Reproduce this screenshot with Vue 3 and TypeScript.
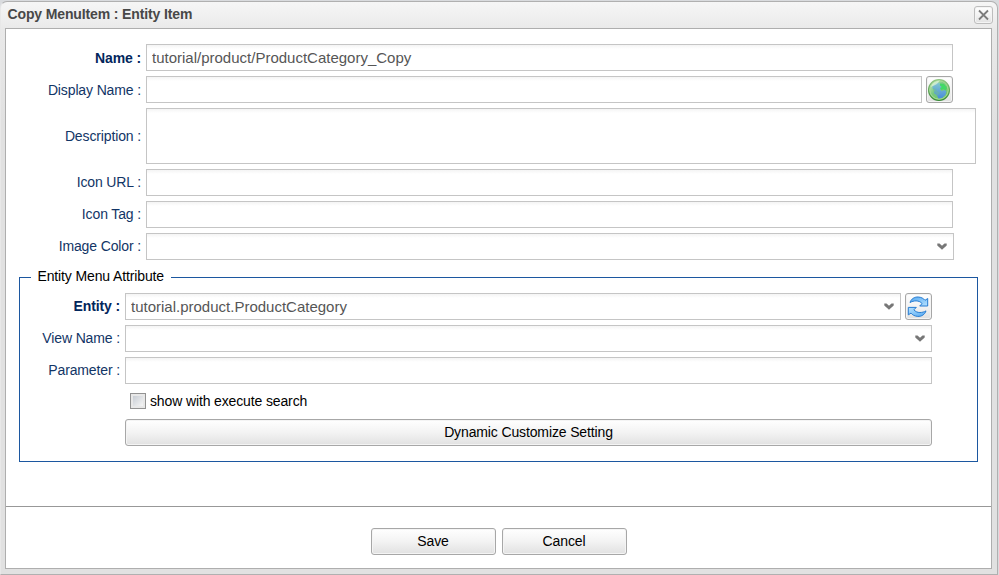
<script setup lang="ts">
import { ref } from 'vue'

interface Field {
  label: string
  value: string
  kind: 'text' | 'globe' | 'area' | 'select' | 'refresh'
  required?: boolean
}

const mainFields = ref<Field[]>([
  { label: 'Name', value: 'tutorial/product/ProductCategory_Copy', kind: 'text', required: true },
  { label: 'Display Name', value: '', kind: 'globe' },
  { label: 'Description', value: '', kind: 'area' },
  { label: 'Icon URL', value: '', kind: 'text' },
  { label: 'Icon Tag', value: '', kind: 'text' },
  { label: 'Image Color', value: '', kind: 'select' },
])

const entityFields = ref<Field[]>([
  { label: 'Entity', value: 'tutorial.product.ProductCategory', kind: 'refresh', required: true },
  { label: 'View Name', value: '', kind: 'select' },
  { label: 'Parameter', value: '', kind: 'text' },
])

const executeSearch = ref(false)
</script>

<template>
  <div class="window">
    <header class="titlebar">
      <span>Copy MenuItem : Entity Item</span>
      <button class="close" aria-label="Close">
        <svg width="17" height="16" viewBox="0 0 17 16"><path d="M4 3.500l9 9M13 3.500l-9 9" stroke="#7b7b7b" stroke-width="1.800" fill="none" /></svg>
      </button>
    </header>

    <main class="body">
      <div class="form">
        <div v-for="f in mainFields" :key="f.label" class="row" :class="f.kind">
          <label :class="{ required: f.required }">{{ f.label }} :</label>
          <textarea v-if="f.kind === 'area'" v-model="f.value" class="field"></textarea>
          <div v-else class="field">
            <input v-model="f.value" type="text" spellcheck="false" />
            <svg v-if="f.kind === 'select'" class="arrow" width="10" height="7" viewBox="0 0 10 7"><path d="M.3.5h2.200L5 2.700 7.500.5h2.200v2L5 6.800.3 2.500z" fill="#777" /></svg>
          </div>
          <button v-if="f.kind === 'globe'" class="icon-button" aria-label="Languages">
            <svg width="25" height="25" viewBox="0 0 25 25">
              <defs>
                <linearGradient id="rim" x1="0" y1="0" x2="0" y2="1"><stop offset="0" stop-color="#91c683" /><stop offset="1" stop-color="#388a36" /></linearGradient>
                <linearGradient id="land" x1="0" y1="0" x2="1" y2="1"><stop offset="0" stop-color="#d3efc7" /><stop offset=".45" stop-color="#77c880" /><stop offset="1" stop-color="#71c65b" /></linearGradient>
                <linearGradient id="sea" x1="0" y1="0" x2="0" y2="1"><stop offset="0" stop-color="#83c8cd" /><stop offset="1" stop-color="#4a8bdc" /></linearGradient>
              </defs>
              <circle cx="12" cy="13" r="10.400" fill="url(#land)" stroke="url(#rim)" stroke-width="1.300" />
              <circle cx="12" cy="13" r="9.200" fill="none" stroke="#a9dc96" stroke-width="1" />
              <path d="M5.500 9l4-3.500 3.500.5-.5 2 2.500 2-2 2 1.500 2 3-1 2 1-1 4-3.500 3-3.500.5-1.500-3-3-2.500.5-3-2-1.500z" fill="url(#sea)" />
              <path d="M13 6.500l4 .5 3 4-1.500 2.500-2-1.500-2 1-1.500-2 2-1-2-1.500z" fill="#42d966" />
              <path d="M6 11l3 1 1 2 3 1.500-1.500 2.500-2 1-1-3-2.500-2z" fill="#6fbe91" opacity=".45" />
              <path d="M3.500 10q3-6.500 9.500-6.500-3 4.500-9.500 6.500z" fill="#e2f3da" opacity=".7" />
            </svg>
          </button>
        </div>
      </div>

      <fieldset>
        <legend>Entity Menu Attribute</legend>
        <div v-for="f in entityFields" :key="f.label" class="row" :class="f.kind">
          <label :class="{ required: f.required }">{{ f.label }} :</label>
          <div class="field">
            <input v-model="f.value" type="text" spellcheck="false" />
            <svg v-if="f.kind !== 'text'" class="arrow" width="10" height="7" viewBox="0 0 10 7"><path d="M.3.5h2.200L5 2.700 7.500.5h2.200v2L5 6.800.3 2.500z" fill="#777" /></svg>
          </div>
          <button v-if="f.kind === 'refresh'" class="icon-button" aria-label="Refresh">
            <svg width="25" height="25" viewBox="0 0 25 25" stroke="#267bd1" stroke-width="1" stroke-linejoin="round">
              <defs>
                <linearGradient id="blue" x1="0" y1="0" x2="1" y2="1"><stop offset="0" stop-color="#54a9f2" /><stop offset="1" stop-color="#b7e2ff" /></linearGradient>
              </defs>
              <path id="turn" d="M4 8.500C5.200 4.800 8.500 2.800 12.200 3c3.200.2 5.300 1.500 6.800 3.300L21.700 4.500v7.500h-8l2.400-2.400c-1.700-1.900-3.600-2.700-6-2.700-2.200 0-4.200.5-6.100 1.600z" fill="url(#blue)" />
              <use href="#turn" transform="rotate(180 12 12.700)" />
            </svg>
          </button>
        </div>
        <label class="check">
          <input v-model="executeSearch" type="checkbox" />
          <span>show with execute search</span>
        </label>
        <button class="button wide">Dynamic Customize Setting</button>
      </fieldset>

      <footer>
        <button class="button">Save</button>
        <button class="button">Cancel</button>
      </footer>
    </main>
  </div>
</template>

<style>
body {
  background: #d9dbde;
}
</style>

<style scoped>
* {
  box-sizing: border-box;
}
.window {
  width: 998px;
  height: 574px;
  margin-top: 1px;
  padding: 0 5px 5px;
  display: flex;
  flex-direction: column;
  border: 1px solid #b0b0b0;
  border-left-color: #e8e8e8;
  border-radius: 7px 7px 0 0;
  background: linear-gradient(#f6f6f6, #e9e9e9 28px, #e1e1e1 120px);
  font: 14px "Liberation Sans", Arial, sans-serif;
  letter-spacing: -0.13px;
  color: #000;
}
.titlebar {
  height: 26px;
  flex: none;
  display: flex;
  align-items: center;
  justify-content: space-between;
  padding: 0 0 2px 1.5px;
  color: #484848;
  font-weight: bold;
}
button {
  font: inherit;
  letter-spacing: inherit;
  padding: 0;
  margin: 0;
  border: 1px solid #a7a7a7;
  border-radius: 3px;
  background: linear-gradient(#fff, #f3f3f3 50%, #e1e1e1);
  box-shadow: inset 0 0 0 1px #f4f4f4;
  color: #000;
}
.close {
  width: 19px;
  height: 18px;
  display: flex;
  align-items: center;
  justify-content: center;
  border-color: #bdbdbd;
  margin: 2px -1px 0 0;
}
.close svg {
  flex: none;
}
.body {
  flex: 1;
  margin-left: -1px;
  border: 1px solid #aeaeae;
  background: #fff;
  display: flex;
  flex-direction: column;
}
.form {
  padding: 15px 38px 0 20px;
  display: grid;
  gap: 5px;
}
.row {
  display: flex;
  height: 27px;
  align-items: center;
}
.row > label {
  width: 115px;
  margin-right: 5px;
  text-align: right;
  color: #123566;
  white-space: pre;
  flex: none;
}
.row > label.required {
  color: #03265c;
  font-weight: bold;
}
.row.area ~ .row > label,
fieldset .row > label {
  padding-bottom: 1px;
}
.field {
  flex: 1;
  height: 100%;
  border: 1px solid #c5c5c5;
  background: linear-gradient(#f4f4f4, #fff 4px);
  display: flex;
  align-items: center;
}
.row.area {
  height: 56px;
}
.row.area .field {
  margin-right: -23px;
  resize: none;
}
.form .row.select .field {
  margin-right: -1px;
}
.field input {
  flex: 1;
  min-width: 0;
  height: 100%;
  padding: 0 5px;
  border: 0;
  outline: 0;
  background: transparent;
  font: 15px "Liberation Sans", Arial, sans-serif;
  letter-spacing: 0;
  color: #565656;
}
.arrow {
  margin-right: 6px;
}
.icon-button {
  width: 27px;
  height: 27px;
  margin-left: 4px;
  flex: none;
  display: flex;
  align-items: center;
  justify-content: center;
}
fieldset {
  margin: 9px 13px 0;
  padding: 8px 45px 15px 20px;
  min-width: 0;
  height: 193px;
  border: 1px solid #1c57a0;
  display: flex;
  flex-direction: column;
  gap: 5px;
}
legend {
  margin-left: -9px;
  padding: 0 7px 0 6.5px;
  height: 16px;
  line-height: 14px;
}
fieldset .row > label {
  width: 80px;
}
.check {
  height: 25px;
  padding-bottom: 1px;
  margin-left: 90px;
  display: flex;
  align-items: center;
  gap: 4px;
}
.check input {
  appearance: none;
  width: 16px;
  height: 16px;
  margin: 0;
  border: 1px solid #929292;
  background: linear-gradient(135deg, #c8cdd4, #f5f5f5) content-box, #e8e8e8;
  padding: 2px;
}
.button {
  width: 125px;
  height: 27px;
  padding-bottom: 1px;
}
.wide {
  width: auto;
  margin-left: 85px;
}
footer {
  margin-top: auto;
  height: 62px;
  display: flex;
  justify-content: center;
  padding-top: 21px;
  gap: 6px;
  border-top: 1px solid #989898;
}
</style>
